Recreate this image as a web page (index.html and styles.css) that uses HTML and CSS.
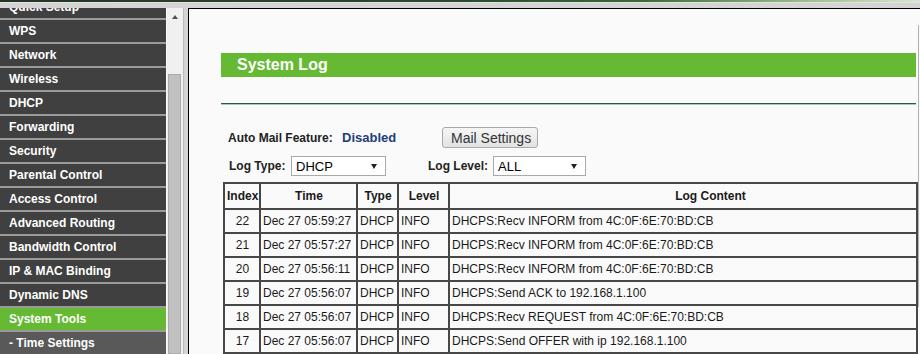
FILE: index.html
```html
<!DOCTYPE html>
<html>
<head>
<meta charset="utf-8">
<title>System Log</title>
<link rel="stylesheet" href="styles.css">
</head>
<body>
<div class="top-green"></div>
<div class="top-grey"></div>
<div class="main">
  <div class="side">
    <div class="menu">
      <ul>
        <li>Quick Setup</li>
        <li>WPS</li>
        <li>Network</li>
        <li>Wireless</li>
        <li>DHCP</li>
        <li>Forwarding</li>
        <li>Security</li>
        <li>Parental Control</li>
        <li>Access Control</li>
        <li>Advanced Routing</li>
        <li>Bandwidth Control</li>
        <li>IP &amp; MAC Binding</li>
        <li>Dynamic DNS</li>
        <li class="active">System Tools</li>
        <li class="sub">- Time Settings</li>
      </ul>
    </div>
    <div class="vscroll">
      <span class="arrow-up"></span>
      <div class="thumb"></div>
    </div>
  </div>
  <div class="divider"></div>
  <div class="content">
    <div class="inner">
      <div class="title">System Log</div>
      <div class="rule"></div>
      <div class="row1">
        <span class="lbl lbl-auto">Auto Mail Feature:</span>
        <span class="status">Disabled</span>
        <button class="btn" type="button">Mail Settings</button>
      </div>
      <div class="row2">
        <span class="lbl lbl-type">Log Type:</span>
        <div class="select sel-type"><span>DHCP</span><span class="caret"></span></div>
        <span class="lbl lbl-level">Log Level:</span>
        <div class="select sel-level"><span>ALL</span><span class="caret"></span></div>
      </div>
      <table class="log">
        <colgroup>
          <col class="w-index"><col class="w-time"><col class="w-type"><col class="w-level"><col class="w-content">
        </colgroup>
        <tr><th>Index</th><th>Time</th><th>Type</th><th>Level</th><th class="content-h">Log Content</th></tr>
        <tr><td class="c">22</td><td>Dec 27 05:59:27</td><td>DHCP</td><td>INFO</td><td>DHCPS:Recv INFORM from 4C:0F:6E:70:BD:CB</td></tr>
        <tr><td class="c">21</td><td>Dec 27 05:57:27</td><td>DHCP</td><td>INFO</td><td>DHCPS:Recv INFORM from 4C:0F:6E:70:BD:CB</td></tr>
        <tr><td class="c">20</td><td>Dec 27 05:56:11</td><td>DHCP</td><td>INFO</td><td>DHCPS:Recv INFORM from 4C:0F:6E:70:BD:CB</td></tr>
        <tr><td class="c">19</td><td>Dec 27 05:56:07</td><td>DHCP</td><td>INFO</td><td>DHCPS:Send ACK to 192.168.1.100</td></tr>
        <tr><td class="c">18</td><td>Dec 27 05:56:07</td><td>DHCP</td><td>INFO</td><td>DHCPS:Recv REQUEST from 4C:0F:6E:70:BD:CB</td></tr>
        <tr><td class="c">17</td><td>Dec 27 05:56:07</td><td>DHCP</td><td>INFO</td><td>DHCPS:Send OFFER with ip 192.168.1.100</td></tr>
        <tr><td>&nbsp;</td><td>&nbsp;</td><td>&nbsp;</td><td>&nbsp;</td><td>&nbsp;</td></tr>
      </table>
    </div>
    <div class="cscroll"><div class="cthumb"></div></div>
  </div>
</div>
</body>
</html>
```
FILE: styles.css
```css
* { box-sizing: border-box; }
html, body { margin: 0; padding: 0; }
body {
  width: 920px;
  height: 354px;
  overflow: hidden;
  background: #fafafa;
  font-family: "Liberation Sans", Arial, sans-serif;
}
.top-green {
  height: 2px;
  background: linear-gradient(to right, #26352a 0%, #2b4a2e 50%, #3d6a3a 70%, #9fbf90 88%, #d8e6d0 100%);
}
.top-grey {
  height: 6px;
  background: #d4d4d4;
  border-top: 1px solid #e2e2e2;
}
.main { display: flex; height: 346px; }
.side { display: flex; width: 183px; flex: none; }
.menu { width: 166px; overflow: hidden; background: #404040; }
.menu ul { list-style: none; margin: -12px 0 0; padding: 0; }
.menu li {
  height: 24px;
  line-height: 22px;
  border-bottom: 2px solid #9a9a9a;
  background: #404040;
  color: #fff;
  font-weight: bold;
  font-size: 12px;
  padding-left: 9px;
  white-space: nowrap;
}
.menu li.active { background: #66b933; }
.menu li.sub { background: #595959; }
.vscroll {
  width: 17px;
  background: #f0f0f0;
  border-left: 1px solid #fbfbfb;
  display: flex;
  flex-direction: column;
}
.arrow-up {
  display: block;
  width: 0;
  height: 0;
  margin: 7px auto 0;
  border-left: 3px solid transparent;
  border-right: 3px solid transparent;
  border-bottom: 4px solid #505050;
}
.thumb {
  flex: 1;
  margin: 55px 2px 0 1px;
  background: #c1c1c1;
  border: 1px solid #ababab;
}
.divider {
  width: 5px;
  flex: none;
  background: #d4d4d4;
  border-left: 1px solid #bcbcbc;
}
.content {
  flex: 1;
  display: flex;
  min-width: 0;
  overflow: hidden;
  border-left: 1px solid #000;
  border-top: 1px solid #000;
  background: #fafafa;
}
.inner { flex: 1; min-width: 0; padding: 0 2px 0 32px; }
.cscroll { width: 2px; flex: none; }
.cthumb { width: 1px; margin-top: 16px; height: 282px; background: #b0b0b0; }
.title {
  margin-top: 44px;
  height: 24px;
  line-height: 24px;
  background: #66b933;
  color: #fff;
  font-size: 16px;
  font-weight: bold;
  padding-left: 16px;
}
.rule {
  margin-top: 26px;
  height: 2px;
  border-top: 1px solid #2c5a4a;
  border-bottom: 1px solid #a8c8bc;
}
.row1 {
  display: flex;
  align-items: center;
  height: 21px;
  margin-top: 22px;
  padding-left: 7px;
}
.lbl { font-size: 12px; font-weight: bold; color: #222; white-space: nowrap; }
.lbl-auto { width: 114px; }
.status { width: 100px; font-size: 13px; font-weight: bold; color: #1f3c7e; }
.btn {
  width: 96px;
  height: 21px;
  padding: 0 0 0 8px;
  text-align: left;
  font-family: "Liberation Sans", Arial, sans-serif;
  font-size: 14px;
  color: #333;
  background: linear-gradient(#f6f6f6, #e2e2e2);
  border: 1px solid #a9a9a9;
  border-radius: 3px;
}
.row2 {
  display: flex;
  align-items: center;
  height: 20px;
  margin-top: 8px;
  padding-left: 8px;
}
.lbl-type { width: 62px; }
.lbl-level { width: 65px; margin-left: 42px; }
.select {
  display: flex;
  align-items: center;
  justify-content: space-between;
  height: 20px;
  padding: 0 8px 0 4px;
  border: 1px solid #a9a9a9;
  background: #fff;
  font-size: 13px;
  color: #000;
}
.sel-type { width: 95px; }
.sel-level { width: 93px; }
.caret {
  width: 0;
  height: 0;
  border-left: 3px solid transparent;
  border-right: 3px solid transparent;
  border-top: 5px solid #222;
}
table.log {
  margin: 6px 0 0 2px;
  width: 693px;
  border-collapse: collapse;
  table-layout: fixed;
  font-size: 12px;
  color: #1a1a1a;
}
.w-index { width: 36px; }
.w-time { width: 97px; }
.w-type { width: 41px; }
.w-level { width: 51px; }
.w-content { width: 468px; }
.log th, .log td {
  border: 2px solid #474747;
  padding: 0 1px 0 2px;
  white-space: nowrap;
  overflow: hidden;
}
.log th { line-height: 24px; font-weight: bold; text-align: center; }
.log td { line-height: 22px; text-align: left; }
.log td.c { text-align: center; }
.log th.content-h { padding-left: 56px; }
```
